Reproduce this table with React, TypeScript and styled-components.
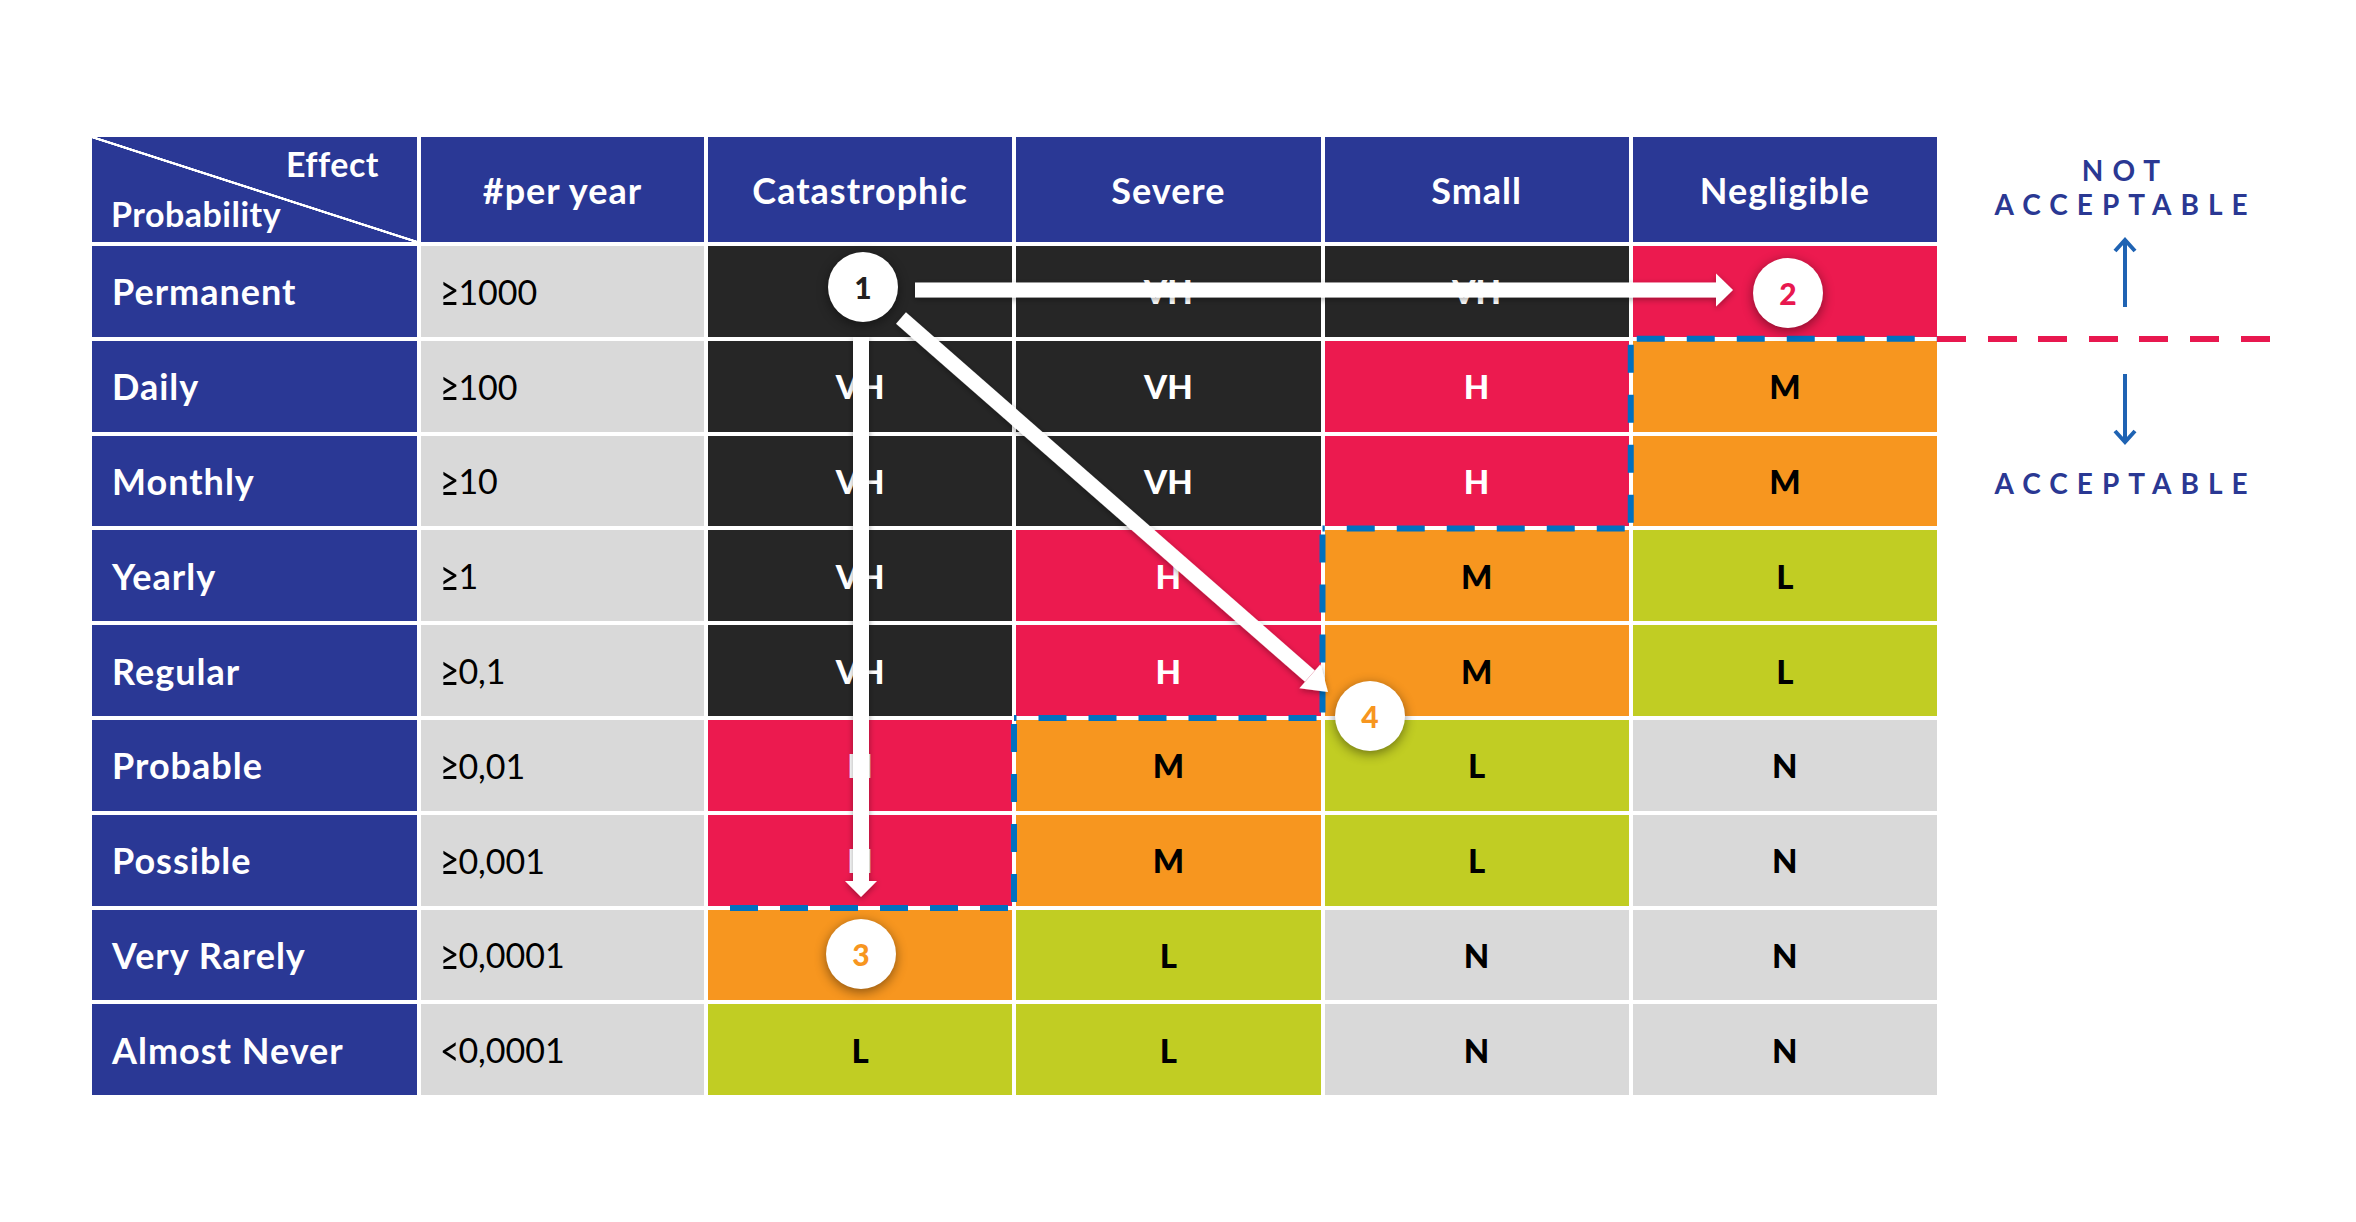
import styled, { createGlobalStyle } from 'styled-components';

const GlobalStyle = createGlobalStyle`
  body {
    margin: 0;
    background: #ffffff;
    font-family: Lato, 'Liberation Sans', sans-serif;
  }
`;

type Level = 'VH' | 'H' | 'M' | 'L' | 'N';

const levelColors: Record<Level, { bg: string; fg: string }> = {
  VH: { bg: '#262626', fg: '#ffffff' },
  H: { bg: '#ec1a4f', fg: '#ffffff' },
  M: { bg: '#f7961f', fg: '#000000' },
  L: { bg: '#c1cd23', fg: '#000000' },
  N: { bg: '#d9d9d9', fg: '#000000' },
};

const effects = ['Catastrophic', 'Severe', 'Small', 'Negligible'];

const rows: { name: string; sign: string; freq: string; levels: Level[] }[] = [
  { name: 'Permanent', sign: '≥', freq: '1000', levels: ['VH', 'VH', 'VH', 'H'] },
  { name: 'Daily', sign: '≥', freq: '100', levels: ['VH', 'VH', 'H', 'M'] },
  { name: 'Monthly', sign: '≥', freq: '10', levels: ['VH', 'VH', 'H', 'M'] },
  { name: 'Yearly', sign: '≥', freq: '1', levels: ['VH', 'H', 'M', 'L'] },
  { name: 'Regular', sign: '≥', freq: '0,1', levels: ['VH', 'H', 'M', 'L'] },
  { name: 'Probable', sign: '≥', freq: '0,01', levels: ['H', 'M', 'L', 'N'] },
  { name: 'Possible', sign: '≥', freq: '0,001', levels: ['H', 'M', 'L', 'N'] },
  { name: 'Very Rarely', sign: '≥', freq: '0,0001', levels: ['M', 'L', 'N', 'N'] },
  { name: 'Almost Never', sign: '<', freq: '0,0001', levels: ['L', 'L', 'N', 'N'] },
];

const badges = [
  { n: 1, x: 771, y: 150, color: '#231f20' },
  { n: 2, x: 1696, y: 156, color: '#e8184f' },
  { n: 3, x: 769, y: 817, color: '#f7961f' },
  { n: 4, x: 1278, y: 579, color: '#f7961f' },
];

// acceptable / not acceptable border, in table coordinates
const boundary = [
  [1538.75, 201.8, 1845, 201.8],
  [1538.75, 201.8, 1538.75, 391.4],
  [1538.75, 391.4, 1230.5, 391.4],
  [1230.5, 391.4, 1230.5, 581],
  [1230.5, 581, 922, 581],
  [922, 581, 922, 771],
  [922, 771, 616, 771],
];

const Page = styled.div`
  display: flex;
  align-items: flex-start;
  box-sizing: border-box;
  width: 2356px;
  height: 1222px;
  padding: 137px 0 0 92px;
`;

const Matrix = styled.div`
  position: relative;
  display: grid;
  grid-template-columns: 325px 283px repeat(4, 304.25px);
  grid-template-rows: 105px repeat(9, 90.8px);
  gap: 4px;
`;

const HeadCell = styled.div`
  display: flex;
  align-items: center;
  justify-content: center;
  background: #2a3895;
  color: #ffffff;
  font-size: 36px;
  font-weight: 700;
  letter-spacing: 1px;
`;

const CornerCell = styled.div`
  display: flex;
  flex-direction: column;
  justify-content: space-between;
  padding: 7px 38px 8px 19px;
  color: #ffffff;
  font-size: 34px;
  font-weight: 700;
  letter-spacing: 0.5px;
  line-height: 40px;
  background: linear-gradient(
    to top right,
    #2a3895 calc(50% - 1.5px),
    #ffffff calc(50% - 1px),
    #ffffff calc(50% + 1px),
    #2a3895 calc(50% + 1.5px)
  );
`;

const CornerTop = styled.span`
  align-self: flex-end;
`;

const CornerBottom = styled.span`
  align-self: flex-start;
`;

const RowLabel = styled.div`
  display: flex;
  align-items: center;
  padding-left: 20px;
  background: #2a3895;
  color: #ffffff;
  font-size: 36px;
  font-weight: 700;
  letter-spacing: 1px;
`;

const FreqCell = styled.div`
  display: flex;
  align-items: center;
  padding-left: 19px;
  background: #d9d9d9;
  color: #000000;
  font-size: 34px;
`;

const Sign = styled.span`
  display: inline-block;
  margin-right: -6px;
  font-size: 42px;
  line-height: 1;
  transform: scaleX(0.8);
  transform-origin: left center;
`;

const RiskCell = styled.div<{ $level: Level }>`
  display: flex;
  align-items: center;
  justify-content: center;
  background: ${(p) => levelColors[p.$level].bg};
  color: ${(p) => levelColors[p.$level].fg};
  font-size: 33px;
  font-weight: 900;
`;

const Overlay = styled.svg`
  position: absolute;
  left: 0;
  top: 0;
  width: 100%;
  height: 100%;
  overflow: visible;
  pointer-events: none;
`;

const Badge = styled.div<{ $x: number; $y: number; $color: string }>`
  position: absolute;
  left: ${(p) => p.$x - 35}px;
  top: ${(p) => p.$y - 35}px;
  width: 70px;
  height: 70px;
  border-radius: 50%;
  display: flex;
  align-items: center;
  justify-content: center;
  background: #ffffff;
  box-shadow: 0 3px 12px rgba(0, 0, 0, 0.45);
  color: ${(p) => p.$color};
  font-size: 30px;
  font-weight: 900;
`;

const Legend = styled.div`
  display: flex;
  flex-direction: column;
  align-items: center;
  width: 368px;
  padding-top: 16px;
`;

const LegendText = styled.div`
  margin-right: -9px;
  color: #2a3893;
  font-size: 28px;
  font-weight: 700;
  letter-spacing: 9px;
  line-height: 34px;
  text-align: center;
`;

const LegendArrow = styled.svg<{ $gap: number }>`
  display: block;
  margin-top: ${(p) => p.$gap}px;
  margin-left: 8px;
`;

const LimitLine = styled.div`
  align-self: flex-start;
  width: 334px;
  height: 6px;
  margin-top: 29px;
  background: repeating-linear-gradient(to right, #e8184f 0 29px, transparent 29px 50.6px);
`;

const LowerLabel = styled(LegendText)`
  margin-top: 21px;
`;

const Arrows = () => {
  const tip = [1236, 555];
  const ux = 0.7538;
  const uy = 0.6572;
  const bx = tip[0] - 24 * ux;
  const by = tip[1] - 24 * uy;
  const nx = -uy * 16;
  const ny = ux * 16;
  return (
    <Overlay>
      <defs>
        <filter id="soft" x="-20%" y="-20%" width="140%" height="140%">
          <feDropShadow dx="0" dy="2" stdDeviation="3" floodColor="#000" floodOpacity="0.35" />
        </filter>
      </defs>
      {boundary.map(([x1, y1, x2, y2], i) => (
        <line
          key={i}
          x1={x1}
          y1={y1}
          x2={x2}
          y2={y2}
          stroke="#0070c0"
          strokeWidth={6}
          strokeDasharray="28 22"
          strokeDashoffset={-6}
        />
      ))}
      <g fill="#ffffff" filter="url(#soft)">
        <rect x={823} y={145.5} width={801} height={15} />
        <polygon points="1624,136.5 1641,153 1624,169.5" />
        <rect x={761} y={200} width={16} height={544} />
        <polygon points="753,744 785,744 769,760" />
        <line x1={809} y1={181} x2={bx} y2={by} stroke="#ffffff" strokeWidth={15} />
        <polygon points={`${bx + nx},${by + ny} ${tip[0]},${tip[1]} ${bx - nx},${by - ny}`} />
      </g>
    </Overlay>
  );
};

const App = () => {
  return (
    <>
      <GlobalStyle />
      <Page>
        <Matrix>
          <CornerCell>
            <CornerTop>Effect</CornerTop>
            <CornerBottom>Probability</CornerBottom>
          </CornerCell>
          <HeadCell>#per year</HeadCell>
          {effects.map((e) => (
            <HeadCell key={e}>{e}</HeadCell>
          ))}
          {rows.map((r) => [
            <RowLabel key={r.name}>{r.name}</RowLabel>,
            <FreqCell key={r.name + '-freq'}>
              <Sign>{r.sign}</Sign>
              {r.freq}
            </FreqCell>,
            ...r.levels.map((l, i) => (
              <RiskCell key={r.name + i} $level={l}>
                {l}
              </RiskCell>
            )),
          ])}
          <Arrows />
          {badges.map((b) => (
            <Badge key={b.n} $x={b.x} $y={b.y} $color={b.color}>
              {b.n}
            </Badge>
          ))}
        </Matrix>
        <Legend>
          <LegendText>NOT</LegendText>
          <LegendText>ACCEPTABLE</LegendText>
          <LegendArrow $gap={16} width="26" height="70" viewBox="0 0 26 70">
            <path d="M13 70 V3 M3 14 L13 3 L23 14" fill="none" stroke="#1f63b3" strokeWidth="4" />
          </LegendArrow>
          <LimitLine />
          <LegendArrow $gap={32} width="26" height="71" viewBox="0 0 26 71">
            <path d="M13 0 V68 M3 57 L13 68 L23 57" fill="none" stroke="#1f63b3" strokeWidth="4" />
          </LegendArrow>
          <LowerLabel>ACCEPTABLE</LowerLabel>
        </Legend>
      </Page>
    </>
  );
};

export default App;
